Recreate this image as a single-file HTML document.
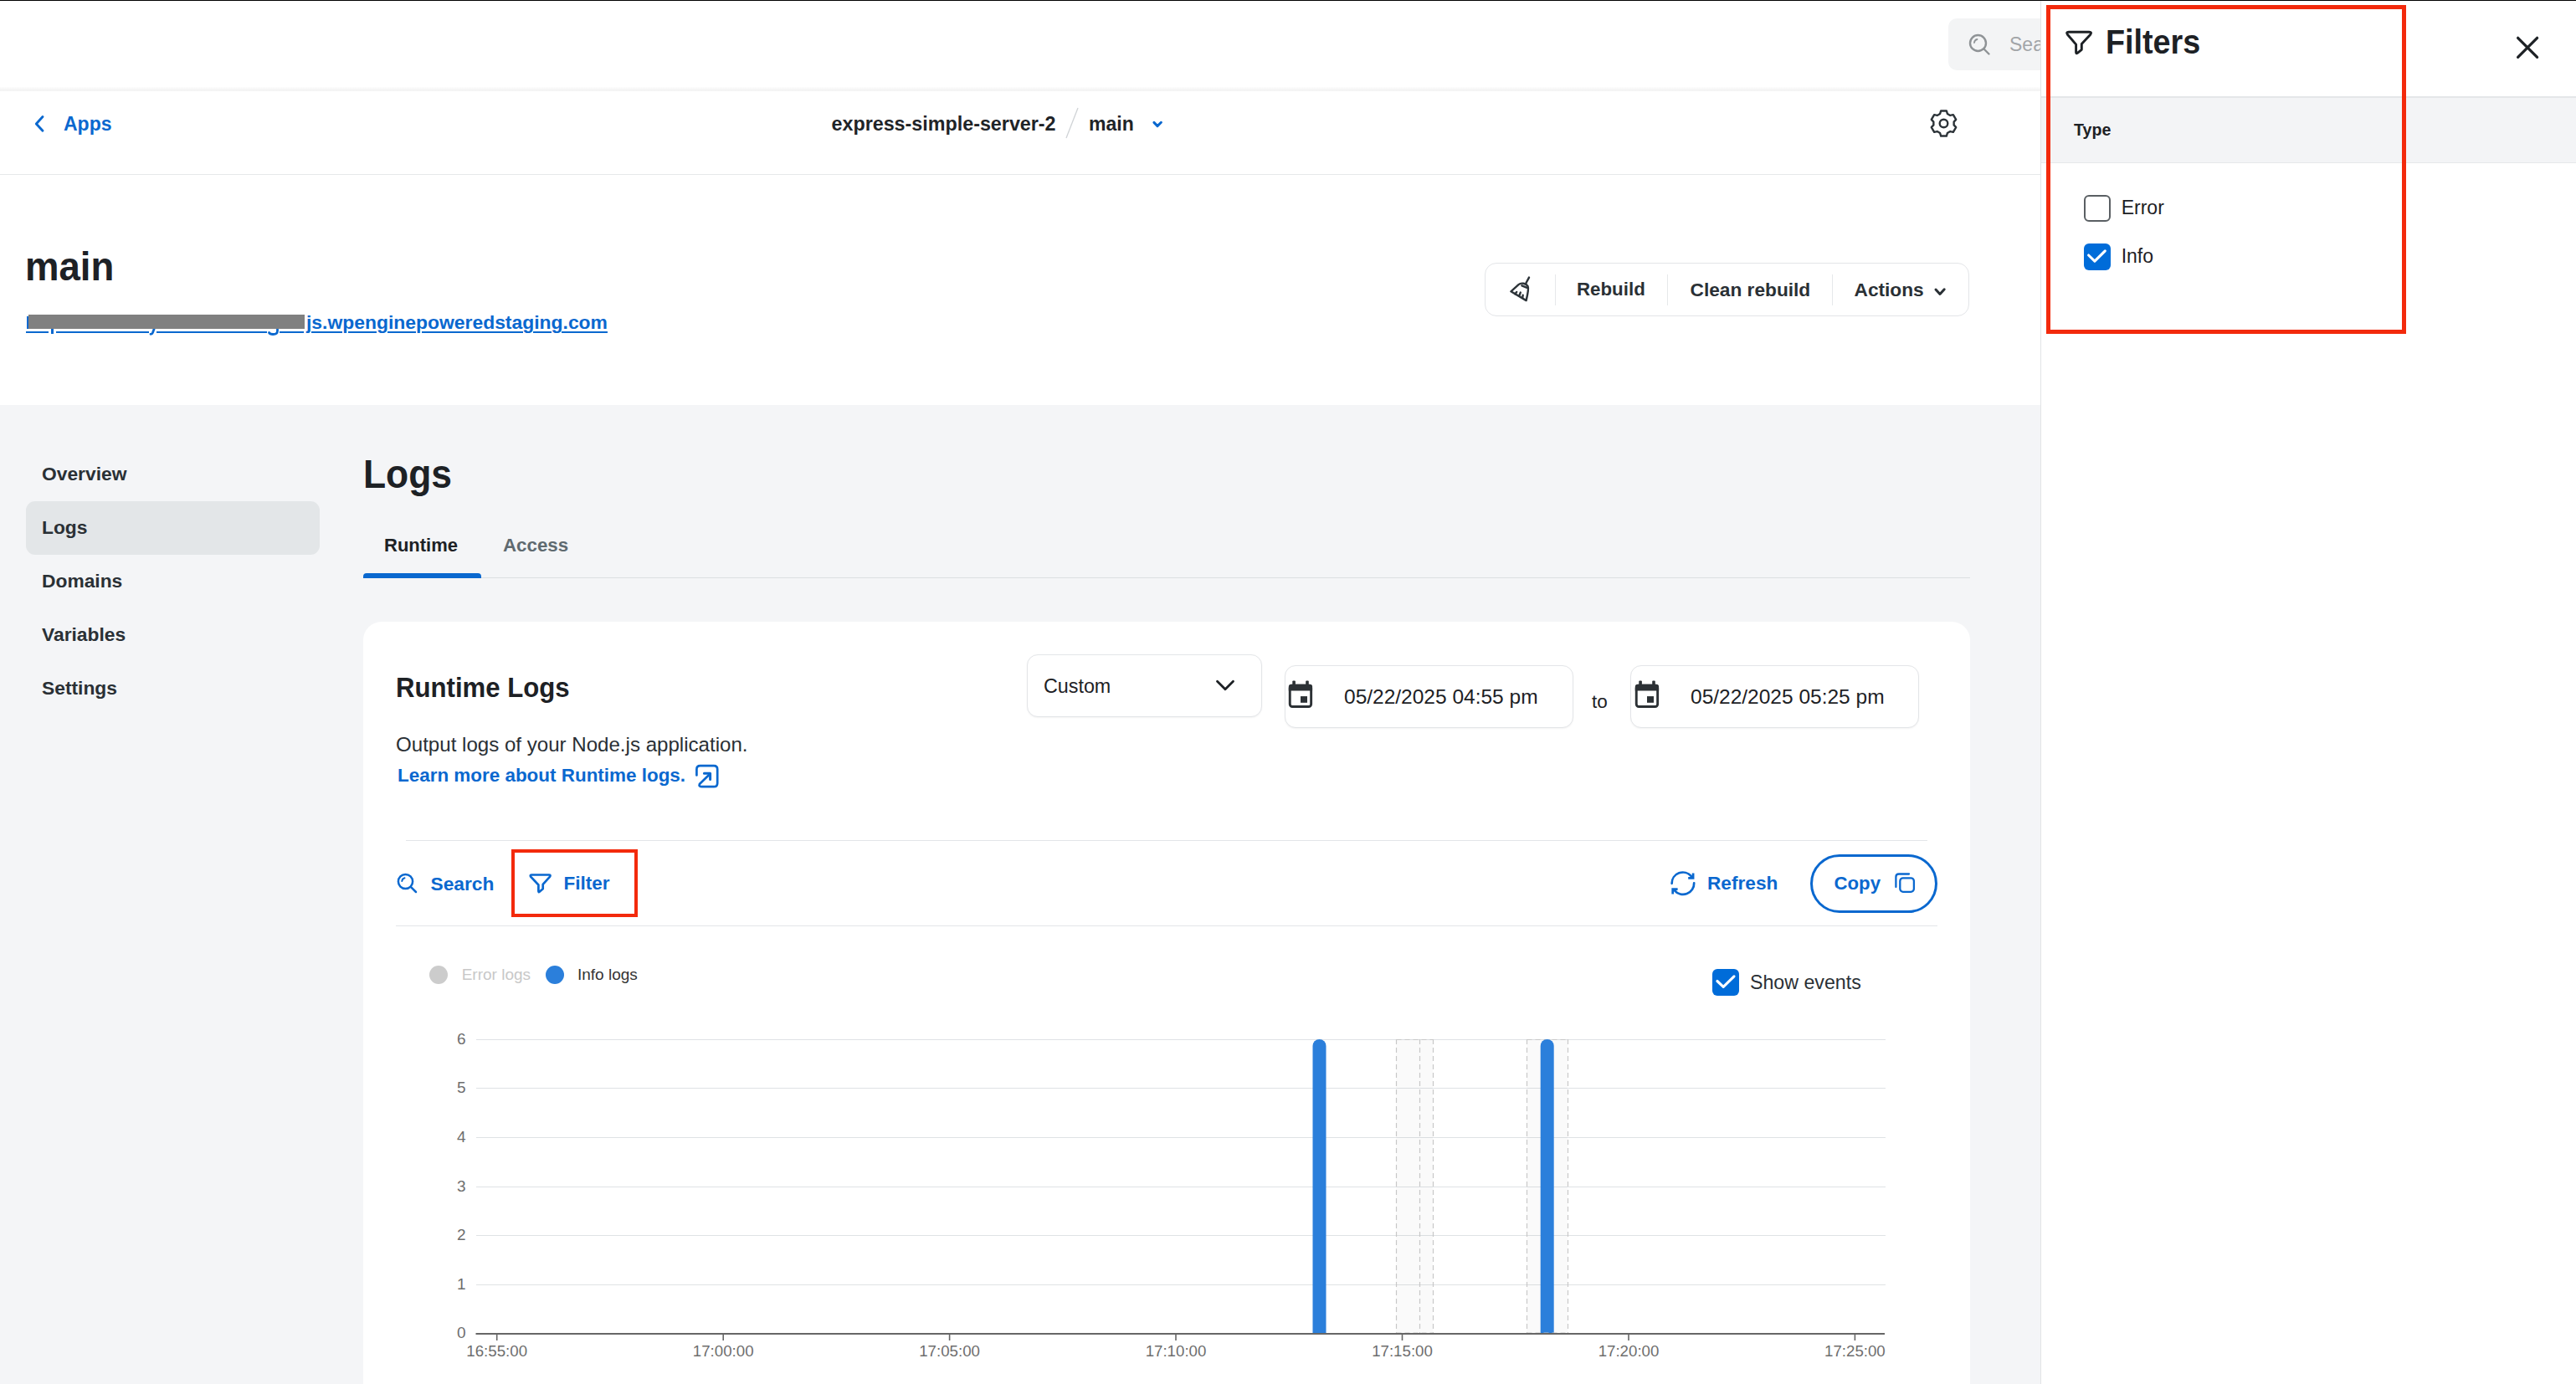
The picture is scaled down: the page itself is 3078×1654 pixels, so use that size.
<!DOCTYPE html>
<html><head><meta charset="utf-8">
<style>
html,body{margin:0;padding:0;}
body{width:3078px;height:1654px;position:relative;overflow:hidden;background:#fff;font-family:"Liberation Sans",sans-serif;color:#1f2428;}
.a{position:absolute;}
.t{position:absolute;line-height:1;white-space:nowrap;font-family:"Liberation Sans",sans-serif;}
.b{font-weight:700;}
.blue{color:#0a68cf;}
svg{position:absolute;overflow:visible;}
</style></head><body>
<!-- top black line -->
<div class="a" style="left:0;top:0;width:3078px;height:1px;background:#000;"></div>

<!-- top search -->
<div class="a" style="left:2328px;top:22px;width:300px;height:62px;border-radius:10px;background:#f3f4f5;"></div>
<svg style="left:2352px;top:40px" width="26" height="26" viewBox="0 0 26 26"><circle cx="11.5" cy="11.5" r="9.5" fill="none" stroke="#8f9396" stroke-width="2.4"/><path d="M18.5 18.5 L24.5 24.5" stroke="#8f9396" stroke-width="2.4" stroke-linecap="round"/><path d="M7 11 A4.5 4.5 0 0 1 10.5 7" fill="none" stroke="#8f9396" stroke-width="1.8" stroke-linecap="round"/></svg>
<div class="t" style="left:2401px;top:41.5px;font-size:23px;color:#a2a5a8;">Search</div>

<!-- header border -->
<div class="a" style="left:0;top:104px;width:2438px;height:5px;background:linear-gradient(to bottom,#fdfdfd,#f8f8f8 40%,#f3f3f3 75%,#f6f6f6);"></div>

<!-- breadcrumb row -->
<svg style="left:41px;top:139px" width="12" height="19" viewBox="0 0 12 19"><path d="M10 0.6 L2.3 9 L10 17.2" fill="none" stroke="#0a68cf" stroke-width="2.9" stroke-linecap="round" stroke-linejoin="round"/></svg>
<div class="t b blue" style="left:76px;top:137px;font-size:23px;">Apps</div>
<div class="t b" style="left:993.5px;top:137px;font-size:23.3px;color:#1f2428;">express-simple-server-2</div>
<svg style="left:1272px;top:128px" width="18" height="38" viewBox="0 0 18 38"><path d="M16 1 L2 37" stroke="#d0d3d6" stroke-width="1.3"/></svg>
<div class="t b" style="left:1301px;top:137px;font-size:23px;color:#1f2428;">main</div>
<svg style="left:1377px;top:144px" width="16" height="10" viewBox="0 0 16 10"><path d="M1.9 2.4 L6 6.6 L10.4 2.3" fill="none" stroke="#0a68cf" stroke-width="3" stroke-linecap="round" stroke-linejoin="round"/></svg>
<!-- gear -->
<svg style="left:2304.5px;top:130.2px" width="35" height="35" viewBox="0 0 35 35"><path fill="none" stroke="#2c3338" stroke-width="2.4" stroke-linejoin="round" d="M13.09 6.02 L14.17 2.47 L20.83 2.47 L21.91 6.02 L25.24 7.94 L28.85 7.10 L32.19 12.87 L29.65 15.58 L29.65 19.42 L32.19 22.13 L28.85 27.90 L25.24 27.06 L21.91 28.98 L20.83 32.53 L14.17 32.53 L13.09 28.98 L9.76 27.06 L6.15 27.90 L2.81 22.13 L5.35 19.42 L5.35 15.58 L2.81 12.87 L6.15 7.10 L9.76 7.94Z"/><circle cx="17.5" cy="17.5" r="4.8" fill="none" stroke="#2c3338" stroke-width="2.4"/></svg>
<div class="a" style="left:0;top:208px;width:2438px;height:1px;background:#e6e8ea;"></div>

<!-- title area -->
<div class="t b" style="left:30px;top:293.5px;font-size:49px;color:#1d2125;transform:scaleX(0.93);transform-origin:0 0;">main</div>
<div class="t b blue" style="left:366px;top:374px;font-size:22.9px;text-decoration:underline;text-decoration-thickness:2px;text-underline-offset:3px;text-decoration-skip-ink:auto;">js.wpenginepoweredstaging.com</div>
<div class="a" style="left:31px;top:396px;width:26.5px;height:1.8px;background:#0a68cf;"></div>
<div class="a" style="left:67px;top:396px;width:110.5px;height:1.8px;background:#0a68cf;"></div>
<div class="a" style="left:186.5px;top:396px;width:132.5px;height:1.8px;background:#0a68cf;"></div>
<div class="a" style="left:334px;top:396px;width:29px;height:1.8px;background:#0a68cf;"></div>
<div class="a" style="left:61px;top:392px;width:3.2px;height:7px;background:#0a68cf;"></div>
<svg style="left:178px;top:392px" width="10" height="9" viewBox="0 0 10 9"><path d="M6.5 0 L4.5 5.5 Q3.8 7.3 2 7.3" fill="none" stroke="#0a68cf" stroke-width="2.8" stroke-linecap="round"/></svg>
<svg style="left:319px;top:392px" width="15" height="9" viewBox="0 0 15 9"><path d="M12.5 0 V3.5 Q12.5 7.5 7.2 7.5 Q3.5 7.5 2.5 5.5" fill="none" stroke="#0a68cf" stroke-width="2.8" stroke-linecap="round"/></svg>
<div class="a" style="left:31.5px;top:377.5px;width:3px;height:15.6px;background:#0a68cf;"></div>
<div class="a" style="left:33.5px;top:376px;width:330.5px;height:17.2px;background:#808080;"></div>

<!-- action group -->
<div class="a" style="left:1774px;top:314px;width:577px;height:62px;border:1px solid #e3e5e8;border-radius:14px;background:#fff;"></div>
<div class="a" style="left:1858px;top:328px;width:1px;height:37px;background:#e6e8ea;"></div>
<div class="a" style="left:1992px;top:328px;width:1px;height:37px;background:#e6e8ea;"></div>
<div class="a" style="left:2189px;top:328px;width:1px;height:37px;background:#e6e8ea;"></div>
<svg style="left:1795px;top:322px" width="45" height="45" viewBox="0 0 45 45"><g fill="none" stroke="#2c3338" stroke-width="2.4" stroke-linecap="round" stroke-linejoin="round"><path d="M32 9.6 L28.3 16.5"/><path d="M10.4 26.3 L19.5 18.2 C22.5 15.5 28.5 16.5 30.6 20.2 C31.8 22.5 31 27 28.6 37.1 Z"/><path d="M23.4 19.3 L29.6 21.8"/><path d="M17.2 27 L15.3 29.3 M21.8 27.6 L20.4 31.2 M24.7 30.6 L24.2 33.8"/></g></svg>
<div class="t b" style="left:1884px;top:335px;font-size:22.3px;color:#2a3035;">Rebuild</div>
<div class="t b" style="left:2019.5px;top:335px;font-size:22.7px;color:#2a3035;">Clean rebuild</div>
<div class="t b" style="left:2215.5px;top:335px;font-size:22.7px;color:#2a3035;">Actions</div>
<svg style="left:2310px;top:343px" width="16" height="12" viewBox="0 0 16 12"><path d="M3 3.1 L8 8.5 L13.2 2.8" fill="none" stroke="#2a3035" stroke-width="3" stroke-linecap="round" stroke-linejoin="round"/></svg>

<!-- gray section -->
<div class="a" style="left:0;top:484px;width:2438px;height:1170px;background:#f4f5f7;"></div>
<div class="a" style="left:31px;top:599px;width:351px;height:64px;border-radius:11px;background:#e3e6e8;"></div>
<div class="t b" style="left:50px;top:555px;font-size:22.8px;color:#2a3035;">Overview</div>
<div class="t b" style="left:50px;top:619px;font-size:22.8px;color:#2a3035;">Logs</div>
<div class="t b" style="left:50px;top:683px;font-size:22.8px;color:#2a3035;">Domains</div>
<div class="t b" style="left:50px;top:747px;font-size:22.8px;color:#2a3035;">Variables</div>
<div class="t b" style="left:50px;top:811px;font-size:22.8px;color:#2a3035;">Settings</div>

<div class="t b" style="left:433.5px;top:541.6px;font-size:49px;color:#1d2125;transform:scaleX(0.906);transform-origin:0 0;">Logs</div>
<div class="t b" style="left:459px;top:641px;font-size:22px;color:#1d2125;">Runtime</div>
<div class="t b" style="left:601px;top:641px;font-size:22.3px;color:#5f6a70;">Access</div>
<div class="a" style="left:434px;top:690px;width:1920px;height:1px;background:#dcdfe2;"></div>
<div class="a" style="left:434px;top:685px;width:141px;height:6px;border-radius:4px 4px 0 0;background:#0a68cf;"></div>

<!-- card -->
<div class="a" style="left:434px;top:743px;width:1920px;height:1000px;border-radius:22px;background:#fff;"></div>

<!-- card contents -->
<div class="t b" style="left:472.5px;top:804px;font-size:34px;color:#1d2125;transform:scaleX(0.916);transform-origin:0 0;">Runtime Logs</div>
<div class="t" style="left:473px;top:877.7px;font-size:24.1px;color:#2a3035;">Output logs of your Node.js application.</div>
<div class="t b blue" style="left:475px;top:916.4px;font-size:22.45px;">Learn more about Runtime logs.</div>
<svg style="left:825px;top:908px" width="40" height="40" viewBox="0 0 40 40"><g fill="none" stroke="#0a68cf" stroke-width="2.7" stroke-linecap="round" stroke-linejoin="round"><path d="M7.4 18.5 V11.4 Q7.4 7.2 11.6 7.2 H28 Q32.2 7.2 32.2 11.4 V28 Q32.2 32.2 28 32.2 H13.8 Q9.6 32.2 10.9 29 L23.2 17"/><path d="M16.4 16.3 H23.6 V23.5" stroke-width="3"/></g></svg>

<div class="a" style="left:1226.5px;top:782px;width:279px;height:72.5px;border:1px solid #e3e5e8;border-radius:13px;background:#fff;box-shadow:0 1px 2px rgba(0,0,0,0.05);"></div>
<div class="t" style="left:1247px;top:808.7px;font-size:23.3px;color:#1d2125;">Custom</div>
<svg style="left:1451px;top:811px" width="26" height="16" viewBox="0 0 26 16"><path d="M3.5 3.2 L13 12.8 L22.5 3.2" fill="none" stroke="#1d2125" stroke-width="2.8" stroke-linecap="round" stroke-linejoin="round"/></svg>

<div class="a" style="left:1534.5px;top:795px;width:343px;height:72.5px;border:1px solid #e3e5e8;border-radius:13px;background:#fff;box-shadow:0 1px 2px rgba(0,0,0,0.05);"></div>
<svg style="left:1532px;top:805px" width="45" height="45" viewBox="0 0 45 45"><g fill="#2c3135"><rect x="12.3" y="8.6" width="3.6" height="5" rx="1"/><rect x="28.2" y="8.6" width="3.6" height="5" rx="1"/><rect x="22" y="27.1" width="8" height="7.7"/></g><rect x="9.25" y="14.25" width="25.4" height="25.3" rx="3" fill="none" stroke="#2c3135" stroke-width="2.9"/><path d="M7.8 20.6 V15.8 Q7.8 12.8 10.8 12.8 H33.1 Q36.1 12.8 36.1 15.8 V20.6 Z" fill="#2c3135"/></svg>
<div class="t" style="left:1606px;top:820.9px;font-size:24.5px;color:#1d2125;">05/22/2025 04:55 pm</div>
<div class="t" style="left:1902px;top:827.6px;font-size:22.5px;color:#1d2125;">to</div>
<div class="a" style="left:1948px;top:795px;width:343px;height:72.5px;border:1px solid #e3e5e8;border-radius:13px;background:#fff;box-shadow:0 1px 2px rgba(0,0,0,0.05);"></div>
<svg style="left:1946.2px;top:805px" width="45" height="45" viewBox="0 0 45 45"><g fill="#2c3135"><rect x="12.3" y="8.6" width="3.6" height="5" rx="1"/><rect x="28.2" y="8.6" width="3.6" height="5" rx="1"/><rect x="22" y="27.1" width="8" height="7.7"/></g><rect x="9.25" y="14.25" width="25.4" height="25.3" rx="3" fill="none" stroke="#2c3135" stroke-width="2.9"/><path d="M7.8 20.6 V15.8 Q7.8 12.8 10.8 12.8 H33.1 Q36.1 12.8 36.1 15.8 V20.6 Z" fill="#2c3135"/></svg>
<div class="t" style="left:2020px;top:820.9px;font-size:24.5px;color:#1d2125;">05/22/2025 05:25 pm</div>

<div class="a" style="left:485px;top:1004px;width:1818px;height:1px;background:#e3e5e8;"></div>
<div class="a" style="left:473px;top:1106px;width:1842px;height:1px;background:#e3e5e8;"></div>

<svg style="left:474px;top:1043px" width="26" height="25" viewBox="0 0 26 25"><circle cx="10.5" cy="10.5" r="8.6" fill="none" stroke="#0a68cf" stroke-width="2.5"/><path d="M16.8 16.8 L23 23" stroke="#0a68cf" stroke-width="2.5" stroke-linecap="round"/><path d="M6.3 10 A4.4 4.4 0 0 1 9.5 6.3" fill="none" stroke="#0a68cf" stroke-width="2" stroke-linecap="round"/></svg>
<div class="t b blue" style="left:514.5px;top:1044.7px;font-size:22.75px;">Search</div>
<div class="a" style="left:610.5px;top:1014.5px;width:143px;height:73.5px;border:4px solid #f32a0c;"></div>
<svg style="left:627px;top:1038px" width="40" height="35" viewBox="0 0 40 35"><path d="M8.6 7.5 H28.8 Q31.6 7.5 29.9 9.9 L21.7 18.8 V24.3 L17.6 27.7 Q16.4 28.6 16.4 27.1 V19.5 L7.3 9.9 Q5.7 7.5 8.6 7.5 Z" fill="none" stroke="#0a68cf" stroke-width="2.7" stroke-linejoin="round"/></svg>
<div class="t b blue" style="left:673.5px;top:1044.9px;font-size:22.5px;">Filter</div>

<svg style="left:1990px;top:1035px" width="40" height="40" viewBox="0 0 40 40"><g fill="none" stroke="#0a68cf" stroke-width="2.7"><path d="M7.6 20.8 A13.2 13.2 0 0 1 30.9 12.2" stroke-linecap="round"/><path d="M27.2 14.4 H33.1 V8.4" stroke-linecap="butt"/><path d="M34.2 20.3 A13.2 13.2 0 0 1 10.8 29.1" stroke-linecap="round"/><path d="M14.6 27.6 H8.7 V33.4" stroke-linecap="butt"/></g></svg>
<div class="t b blue" style="left:2040px;top:1044.4px;font-size:22.65px;">Refresh</div>
<div class="a" style="left:2163px;top:1021px;width:146px;height:64px;border:3px solid #0a68cf;border-radius:40px;"></div>
<div class="t b blue" style="left:2191.5px;top:1044.7px;font-size:22.2px;">Copy</div>
<svg style="left:2255px;top:1035px" width="40" height="40" viewBox="0 0 40 40"><g fill="none" stroke="#0a68cf" stroke-width="2.3" stroke-linecap="round"><rect x="15.3" y="14.3" width="16.6" height="16.5" rx="3.6"/><path d="M10.4 25 V13 Q10.4 9.5 13.9 9.5 H26"/></g></svg>

<!-- legend -->
<div class="a" style="left:513px;top:1154px;width:22px;height:22px;border-radius:50%;background:#cccccc;"></div>
<div class="t" style="left:551.7px;top:1154.8px;font-size:19px;color:#c8c8c8;">Error logs</div>
<div class="a" style="left:651.7px;top:1154px;width:22px;height:22px;border-radius:50%;background:#2b7fdb;"></div>
<div class="t" style="left:690px;top:1154.8px;font-size:19px;color:#333;">Info logs</div>

<div class="a" style="left:2046px;top:1158px;width:32px;height:32px;border-radius:6px;background:#006cd9;"></div>
<svg style="left:2046px;top:1158px" width="32" height="32" viewBox="0 0 32 32"><path d="M5.9 14.5 L13.2 21.4 L26 8.9" fill="none" stroke="#fff" stroke-width="3.1" stroke-linecap="round" stroke-linejoin="round"/></svg>
<div class="t" style="left:2091px;top:1163.3px;font-size:23.2px;color:#2a3035;">Show events</div>

<!-- chart -->
<div class="a" style="left:568.5px;top:1242px;width:1684px;height:1px;background:#dfe2e5;"></div>
<div class="a" style="left:568.5px;top:1300px;width:1684px;height:1px;background:#dfe2e5;"></div>
<div class="a" style="left:568.5px;top:1359px;width:1684px;height:1px;background:#dfe2e5;"></div>
<div class="a" style="left:568.5px;top:1418px;width:1684px;height:1px;background:#dfe2e5;"></div>
<div class="a" style="left:568.5px;top:1476px;width:1684px;height:1px;background:#dfe2e5;"></div>
<div class="a" style="left:568.5px;top:1535px;width:1684px;height:1px;background:#dfe2e5;"></div>
<div class="t" style="left:500px;width:56.5px;text-align:right;top:1583.3px;font-size:19px;color:#6e6e6e;">0</div>
<div class="t" style="left:500px;width:56.5px;text-align:right;top:1524.8px;font-size:19px;color:#6e6e6e;">1</div>
<div class="t" style="left:500px;width:56.5px;text-align:right;top:1466.2px;font-size:19px;color:#6e6e6e;">2</div>
<div class="t" style="left:500px;width:56.5px;text-align:right;top:1407.6px;font-size:19px;color:#6e6e6e;">3</div>
<div class="t" style="left:500px;width:56.5px;text-align:right;top:1349.0px;font-size:19px;color:#6e6e6e;">4</div>
<div class="t" style="left:500px;width:56.5px;text-align:right;top:1290.4px;font-size:19px;color:#6e6e6e;">5</div>
<div class="t" style="left:500px;width:56.5px;text-align:right;top:1231.9px;font-size:19px;color:#6e6e6e;">6</div>
<div class="a" style="left:1668px;top:1242px;width:44px;height:352px;background:rgba(0,0,0,0.018);"></div>
<div class="a" style="left:1824px;top:1242px;width:49px;height:352px;background:rgba(0,0,0,0.018);"></div>
<svg style="left:0;top:0" width="3078" height="1654">
<line x1="1668.5" y1="1242" x2="1668.5" y2="1594" stroke="#c8c8c8" stroke-width="1.2" stroke-dasharray="6 4"/>
<line x1="1696.5" y1="1242" x2="1696.5" y2="1594" stroke="#c8c8c8" stroke-width="1.2" stroke-dasharray="6 4"/>
<line x1="1712.5" y1="1242" x2="1712.5" y2="1594" stroke="#c8c8c8" stroke-width="1.2" stroke-dasharray="6 4"/>
<line x1="1824.5" y1="1242" x2="1824.5" y2="1594" stroke="#c8c8c8" stroke-width="1.2" stroke-dasharray="6 4"/>
<line x1="1873.5" y1="1242" x2="1873.5" y2="1594" stroke="#c8c8c8" stroke-width="1.2" stroke-dasharray="6 4"/>
<line x1="1668.5" y1="1242.5" x2="1712.5" y2="1242.5" stroke="#c8c8c8" stroke-width="1.2" stroke-dasharray="6 4"/>
<line x1="1824.5" y1="1242.5" x2="1873.5" y2="1242.5" stroke="#c8c8c8" stroke-width="1.2" stroke-dasharray="6 4"/>
<path d="M1568.5 1594 V1250 A8 8 0 0 1 1584.5 1250 V1594 Z" fill="#2b7fdb"/>
<path d="M1840.7 1594 V1250 A8 8 0 0 1 1856.7 1250 V1594 Z" fill="#2b7fdb"/>
<line x1="1668.5" y1="1593" x2="1712.5" y2="1593" stroke="#c8c8c8" stroke-width="1.2" stroke-dasharray="6 4"/><line x1="1824.5" y1="1593" x2="1873.5" y2="1593" stroke="#c8c8c8" stroke-width="1.2" stroke-dasharray="6 4"/><line x1="568.5" y1="1594" x2="2252" y2="1594" stroke="#666" stroke-width="2"/>
<line x1="593.7" y1="1594" x2="593.7" y2="1602" stroke="#666" stroke-width="1.6"/>
<line x1="864.2" y1="1594" x2="864.2" y2="1602" stroke="#666" stroke-width="1.6"/>
<line x1="1134.6" y1="1594" x2="1134.6" y2="1602" stroke="#666" stroke-width="1.6"/>
<line x1="1405.0" y1="1594" x2="1405.0" y2="1602" stroke="#666" stroke-width="1.6"/>
<line x1="1675.5" y1="1594" x2="1675.5" y2="1602" stroke="#666" stroke-width="1.6"/>
<line x1="1946.0" y1="1594" x2="1946.0" y2="1602" stroke="#666" stroke-width="1.6"/>
<line x1="2216.4" y1="1594" x2="2216.4" y2="1602" stroke="#666" stroke-width="1.6"/>
</svg>
<div class="t" style="left:533.7px;width:120px;text-align:center;top:1606.3px;font-size:18.7px;color:#6e6e6e;">16:55:00</div>
<div class="t" style="left:804.2px;width:120px;text-align:center;top:1606.3px;font-size:18.7px;color:#6e6e6e;">17:00:00</div>
<div class="t" style="left:1074.6px;width:120px;text-align:center;top:1606.3px;font-size:18.7px;color:#6e6e6e;">17:05:00</div>
<div class="t" style="left:1345.0px;width:120px;text-align:center;top:1606.3px;font-size:18.7px;color:#6e6e6e;">17:10:00</div>
<div class="t" style="left:1615.5px;width:120px;text-align:center;top:1606.3px;font-size:18.7px;color:#6e6e6e;">17:15:00</div>
<div class="t" style="left:1886.0px;width:120px;text-align:center;top:1606.3px;font-size:18.7px;color:#6e6e6e;">17:20:00</div>
<div class="t" style="left:2156.4px;width:120px;text-align:center;top:1606.3px;font-size:18.7px;color:#6e6e6e;">17:25:00</div>
<!-- right panel -->
<div class="a" style="left:2438px;top:0;width:640px;height:1654px;background:#fff;border-left:1px solid #e2e4e6;"></div>
<div class="a" style="left:0;top:0;width:3078px;height:1px;background:#000;"></div>
<svg style="left:2460px;top:25px" width="45" height="45" viewBox="0 0 45 45"><path d="M11.9 13.3 H36.3 Q39.9 13.3 37.8 16.2 L27.3 27.4 V34.3 L22.3 38.4 Q20.6 39.6 20.6 37.6 V28.1 L10.4 16.2 Q8.3 13.3 11.9 13.3 Z" fill="none" stroke="#1d2125" stroke-width="2.9" stroke-linejoin="round"/></svg>
<div class="t b" style="left:2516px;top:30px;font-size:41px;color:#1d2125;transform:scaleX(0.92);transform-origin:0 0;">Filters</div>
<svg style="left:3005px;top:44px" width="30" height="27" viewBox="0 0 30 27"><path d="M3.6 1.3 L26.6 24.3 M26.6 1.3 L3.6 24.3" stroke="#1d2125" stroke-width="3.2" stroke-linecap="round"/></svg>
<div class="a" style="left:2439px;top:115px;width:639px;height:2px;background:#e4e6e8;"></div>
<div class="a" style="left:2439px;top:117px;width:639px;height:77px;background:#f3f4f6;"></div>
<div class="a" style="left:2439px;top:194px;width:639px;height:1px;background:#e6e8ea;"></div>
<div class="t b" style="left:2478px;top:146.3px;font-size:19.6px;color:#1d2125;">Type</div>
<div class="a" style="left:2490px;top:233px;width:28px;height:28px;border:2px solid #5a5f63;border-radius:6px;background:#fff;"></div>
<div class="t" style="left:2534.7px;top:237.1px;font-size:23px;color:#1d2125;">Error</div>
<div class="a" style="left:2490px;top:291px;width:32px;height:32px;border-radius:6px;background:#006cd9;"></div>
<svg style="left:2490px;top:291px" width="32" height="32" viewBox="0 0 32 32"><path d="M5.6 14 L12.9 21.2 L25.3 8.8" fill="none" stroke="#fff" stroke-width="3.1" stroke-linecap="round" stroke-linejoin="round"/></svg>
<div class="t" style="left:2534.7px;top:295.2px;font-size:23px;color:#1d2125;">Info</div>
<div class="a" style="left:2445px;top:5.5px;width:420px;height:383px;border:5px solid #f32a0c;"></div>

</body></html>
